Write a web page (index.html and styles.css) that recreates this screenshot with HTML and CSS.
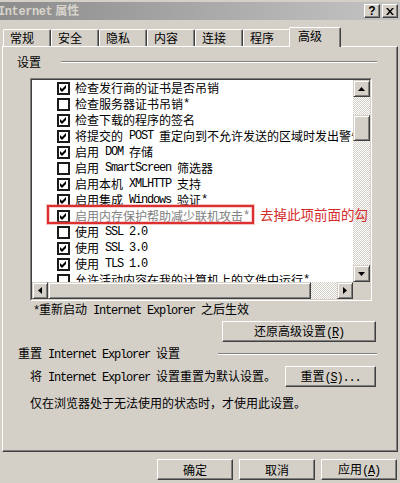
FILE: index.html
```html
<!DOCTYPE html>
<html lang="zh-CN">
<head>
  <meta charset="UTF-8" />
  <title>Internet 属性</title>
  <link rel="stylesheet" href="styles.css">
</head>
<body>

  <div class="window">
    <div class="titlebar">
      <span class="title"><span class="en">Internet</span> 属性</span>
      <div class="title-buttons">
        <span class="tbtn help">?</span>
        <span class="tbtn">
          <svg width="8" height="7" viewBox="0 0 8 7"><path d="M0 0h2l2 2.5L6 0h2L5 3.5 8 7H6L4 4.5 2 7H0l3-3.5z" fill="#000"/></svg>
        </span>
      </div>
    </div>

    <div class="tabs">
      <div class="tab">常规</div>
      <div class="tab">安全</div>
      <div class="tab">隐私</div>
      <div class="tab">内容</div>
      <div class="tab">连接</div>
      <div class="tab">程序</div>
      <div class="tab active">高级</div>
    </div>

    <div class="panel">
      <div class="group-head settings-head">
        <span>设置</span>
        <span class="etch"></span>
      </div>

      <div class="listbox">
        <div class="rows">
          <div class="row"><span class="check on"><svg width="9" height="9" viewBox="0 0 9 9"><polygon points="1,3 3,5 7,1 7,4 3,8 1,6" fill="#000"/></svg></span>检查发行商的证书是否吊销</div>
          <div class="row"><span class="check"></span>检查服务器证书吊销<span class="en">*</span></div>
          <div class="row"><span class="check on"><svg width="9" height="9" viewBox="0 0 9 9"><polygon points="1,3 3,5 7,1 7,4 3,8 1,6" fill="#000"/></svg></span>检查下载的程序的签名</div>
          <div class="row"><span class="check on"><svg width="9" height="9" viewBox="0 0 9 9"><polygon points="1,3 3,5 7,1 7,4 3,8 1,6" fill="#000"/></svg></span>将提交的<span class="en"> POST </span>重定向到不允许发送的区域时发出警告</div>
          <div class="row"><span class="check on"><svg width="9" height="9" viewBox="0 0 9 9"><polygon points="1,3 3,5 7,1 7,4 3,8 1,6" fill="#000"/></svg></span>启用<span class="en"> DOM </span>存储</div>
          <div class="row"><span class="check"></span>启用<span class="en"> SmartScreen </span>筛选器</div>
          <div class="row"><span class="check on"><svg width="9" height="9" viewBox="0 0 9 9"><polygon points="1,3 3,5 7,1 7,4 3,8 1,6" fill="#000"/></svg></span>启用本机<span class="en"> XMLHTTP </span>支持</div>
          <div class="row"><span class="check on"><svg width="9" height="9" viewBox="0 0 9 9"><polygon points="1,3 3,5 7,1 7,4 3,8 1,6" fill="#000"/></svg></span>启用集成<span class="en"> Windows </span>验证<span class="en">*</span></div>
          <div class="row dim"><span class="check on"><svg width="9" height="9" viewBox="0 0 9 9"><polygon points="1,3 3,5 7,1 7,4 3,8 1,6" fill="#000"/></svg></span>启用内存保护帮助减少联机攻击<span class="en">*</span></div>
          <div class="row"><span class="check"></span>使用<span class="en"> SSL 2.0</span></div>
          <div class="row"><span class="check on"><svg width="9" height="9" viewBox="0 0 9 9"><polygon points="1,3 3,5 7,1 7,4 3,8 1,6" fill="#000"/></svg></span>使用<span class="en"> SSL 3.0</span></div>
          <div class="row"><span class="check on"><svg width="9" height="9" viewBox="0 0 9 9"><polygon points="1,3 3,5 7,1 7,4 3,8 1,6" fill="#000"/></svg></span>使用<span class="en"> TLS 1.0</span></div>
          <div class="row"><span class="check"></span>允许活动内容在我的计算机上的文件中运行<span class="en">*</span></div>
        </div>

        <div class="vscroll">
          <span class="sbtn"><svg width="7" height="4" viewBox="0 0 7 4"><polygon points="3.5,0 7,4 0,4" fill="#000"/></svg></span>
          <span class="track short"></span>
          <span class="thumb"></span>
          <span class="track"></span>
          <span class="sbtn"><svg width="7" height="4" viewBox="0 0 7 4"><polygon points="0,0 7,0 3.5,4" fill="#000"/></svg></span>
        </div>

        <div class="hscroll">
          <span class="sbtn"><svg width="4" height="7" viewBox="0 0 4 7"><polygon points="0,3.5 4,0 4,7" fill="#000"/></svg></span>
          <span class="thumb"></span>
          <span class="track"></span>
          <span class="sbtn"><svg width="4" height="7" viewBox="0 0 4 7"><polygon points="0,0 4,3.5 0,7" fill="#000"/></svg></span>
        </div>
        <div class="corner"></div>

        <!-- annotation drawn over the list -->
        <div class="mark-box"></div>
        <div class="mark-text">去掉此项前面的勾</div>
      </div>

      <div class="note"><span class="en">*</span>重新启动<span class="en"> Internet Explorer </span>之后生效</div>

      <div class="btn-row">
        <button class="btn restore">还原高级设置<span class="en">(<u>R</u>)</span></button>
      </div>

      <div class="group-head reset-head">
        <span>重置<span class="en"> Internet Explorer </span>设置</span>
        <span class="etch"></span>
      </div>

      <div class="reset-row">
        <span>将<span class="en"> Internet Explorer </span>设置重置为默认设置。</span>
        <button class="btn reset">重置<span class="en">(<u>S</u>)...</span></button>
      </div>

      <p class="hint">仅在浏览器处于无法使用的状态时，才使用此设置。</p>
    </div>

    <div class="footer">
      <button class="btn">确定</button>
      <button class="btn">取消</button>
      <button class="btn">应用<span class="en">(<u>A</u>)</span></button>
    </div>
  </div>

</body>
</html>
```

FILE: styles.css
```css
* {
  margin: 0;
  padding: 0;
  box-sizing: border-box;
}

body {
  font-family: "Noto Sans CJK SC", sans-serif;
  font-size: 12px;
  line-height: 16px;
  color: #000;
  background: #d4d0c8;
  overflow: hidden;
}

.en {
  font-family: "Liberation Mono", monospace;
  letter-spacing: -1.2px;
  white-space: pre;
}

.window {
  width: 400px;
  height: 483px;
  overflow: hidden;
}

/* title bar */
.titlebar {
  margin-top: 2px;
  height: 18px;
  display: flex;
  align-items: center;
  justify-content: space-between;
  background: linear-gradient(to right, #8c8c8c, #c4c4c4);
  color: #d8d4cc;
}

.title {
  font-weight: bold;
  margin-left: -2px;
}

.title .en {
  letter-spacing: -0.4px;
}

.title-buttons {
  display: flex;
  gap: 2px;
  margin-right: 2px;
}

.tbtn {
  width: 16px;
  height: 14px;
  display: flex;
  align-items: center;
  justify-content: center;
  background: #d4d0c8;
  border: 1px solid;
  border-color: #fff #404040 #404040 #fff;
  box-shadow: inset -1px -1px #808080;
  color: #000;
}

.tbtn.help {
  font-family: "Liberation Sans", sans-serif;
  font-weight: bold;
  font-size: 12px;
  line-height: 12px;
}

/* tabs */
.tabs {
  height: 26px;
  display: flex;
  align-items: flex-end;
  padding-left: 3px;
}

.tab {
  width: 48px;
  height: 17px;
  padding-left: 6px;
  line-height: 16px;
  border-top: 1px solid #fff;
  border-left: 1px solid #fff;
  border-right: 1px solid #404040;
  box-shadow: inset -1px 0 #808080;
  border-radius: 2px 2px 0 0;
  white-space: nowrap;
}

.tab.active {
  position: relative;
  z-index: 1;
  width: 52px;
  height: 20px;
  margin: 0 -2px -1px;
  padding-left: 8px;
  background: #d4d0c8;
}

/* main panel */
.panel {
  margin-left: 2px;
  width: 396px;
  height: 406px;
  border: 1px solid;
  border-color: #fff #404040 #404040 #fff;
  box-shadow: inset -1px -1px #808080;
  padding-top: 7px;
}

.group-head {
  display: flex;
  align-items: center;
  height: 16px;
  gap: 20px;
  margin-right: 20px;
}

.settings-head {
  margin-left: 14px;
}

.reset-head {
  margin-left: 15px;
  margin-top: 4px;
  gap: 38px;
}

.etch {
  flex: 1;
  height: 2px;
  border-top: 1px solid #808080;
  border-bottom: 1px solid #fff;
}

/* list with checkboxes */
.listbox {
  position: relative;
  margin: 8px 0 0 27px;
  width: 342px;
  height: 223px;
  border: 2px solid;
  border-color: #808080 #fff #fff #808080;
  background: #fff;
  display: grid;
  grid-template-columns: 1fr 17px;
  grid-template-rows: 1fr 17px;
}

.listbox::before {
  content: "";
  position: absolute;
  inset: -1px;
  border: 1px solid;
  border-color: #404040 #d4d0c8 #d4d0c8 #404040;
  pointer-events: none;
}

.rows {
  overflow: hidden;
  padding-top: 0;
}

.row {
  display: flex;
  align-items: center;
  height: 16px;
  padding-left: 25px;
  white-space: nowrap;
}

.row.dim {
  color: #808080;
}

.check {
  flex: none;
  width: 13px;
  height: 13px;
  margin-right: 5px;
  background: #fff;
  border: 2px solid #1a1a1a;
  display: flex;
}

.check svg {
  display: block;
}

.vscroll {
  display: flex;
  flex-direction: column;
}

.hscroll {
  display: flex;
}

.sbtn {
  flex: none;
  width: 17px;
  height: 17px;
  display: flex;
  align-items: center;
  justify-content: center;
  background: #d4d0c8;
  border: 1px solid;
  border-color: #d4d0c8 #404040 #404040 #d4d0c8;
  box-shadow: inset 1px 1px #fff, inset -1px -1px #808080;
}

.hscroll .sbtn {
  width: 16px;
}

.thumb {
  flex: none;
  background: #d4d0c8;
  border: 1px solid;
  border-color: #d4d0c8 #404040 #404040 #d4d0c8;
  box-shadow: inset 1px 1px #fff, inset -1px -1px #808080;
}

.vscroll .thumb {
  height: 26px;
}

.hscroll .thumb {
  width: 263px;
}

.track {
  flex: 1;
  background-image: conic-gradient(#d4d0c8 25%, #fff 0 50%, #d4d0c8 0 75%, #fff 0);
  background-size: 2px 2px;
}

.track.short {
  flex: none;
  height: 18px;
}

.corner {
  background: #d4d0c8;
}

.mark-box {
  position: absolute;
  left: 15px;
  top: 125px;
  width: 207px;
  height: 19px;
  border: 2px solid #dc2f2f;
  box-shadow: 0 0 0 1px rgba(236, 120, 120, 0.45), inset 0 0 0 1px rgba(236, 120, 120, 0.35);
}

.mark-text {
  position: absolute;
  left: 228px;
  top: 125px;
  font-size: 13.5px;
  line-height: 18px;
  color: #d42a2a;
  white-space: nowrap;
}

/* below the list */
.note {
  margin: 1px 0 0 30px;
  line-height: 14px;
}

.btn {
  font: inherit;
  color: #000;
  height: 21px;
  background: #d4d0c8;
  border: 1px solid;
  border-color: #fff #404040 #404040 #fff;
  box-shadow: inset -1px -1px #808080;
  text-align: center;
  white-space: nowrap;
}

.btn u {
  text-underline-offset: 1px;
}

.btn-row {
  display: flex;
  justify-content: flex-end;
  margin: 3px 21px 0 0;
}

.restore {
  width: 154px;
}

.reset-row {
  display: flex;
  align-items: center;
  justify-content: space-between;
  margin: 4px 21px 0 27px;
}

.reset {
  width: 91px;
}

.hint {
  margin: 8px 0 0 27px;
}

/* dialog buttons */
.footer {
  display: flex;
  justify-content: flex-end;
  gap: 6px;
  margin: 7px 3px 0 0;
}

.footer .btn {
  width: 76px;
}
```
